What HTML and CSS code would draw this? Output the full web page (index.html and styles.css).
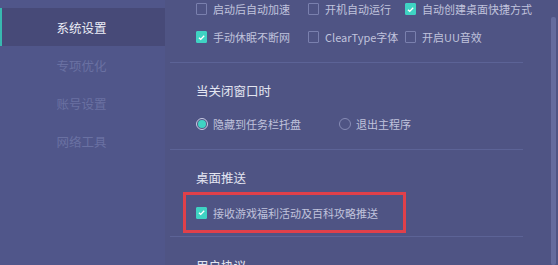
FILE: index.html
```html
<!DOCTYPE html>
<html lang="zh-CN">
<head>
<meta charset="utf-8">
<link rel="stylesheet" href="styles.css">
</head>
<body>
<div class="app">
  <nav class="sidebar">
    <div class="nav-item active">系统设置</div>
    <div class="nav-item">专项优化</div>
    <div class="nav-item">账号设置</div>
    <div class="nav-item">网络工具</div>
  </nav>
  <main class="main">
    <div class="options">
      <label class="opt"><span class="cb"></span>启动后自动加速</label>
      <label class="opt"><span class="cb"></span>开机自动运行</label>
      <label class="opt"><span class="cb on"><svg viewBox="0 0 12 12"><path d="M2.6 6.2 5 8.5 9.6 3.6"/></svg></span>自动创建桌面快捷方式</label>
      <label class="opt"><span class="cb on"><svg viewBox="0 0 12 12"><path d="M2.6 6.2 5 8.5 9.6 3.6"/></svg></span>手动休眠不断网</label>
      <label class="opt"><span class="cb"></span>ClearType字体</label>
      <label class="opt"><span class="cb"></span>开启UU音效</label>
    </div>
    <section class="section s-close">
      <h3 class="heading">当关闭窗口时</h3>
      <div class="radios">
        <label class="opt r1"><span class="radio on"></span>隐藏到任务栏托盘</label>
        <label class="opt"><span class="radio"></span>退出主程序</label>
      </div>
    </section>
    <section class="section s-push">
      <h3 class="heading">桌面推送</h3>
      <div class="highlight">
        <label class="opt"><span class="cb on"><svg viewBox="0 0 12 12"><path d="M2.6 6.2 5 8.5 9.6 3.6"/></svg></span>接收游戏福利活动及百科攻略推送</label>
      </div>
    </section>
    <section class="section s-agree">
      <h3 class="heading">用户协议</h3>
    </section>
    <div class="scrollbar"></div>
  </main>
</div>
</body>
</html>
```

FILE: styles.css
```css
* { box-sizing: border-box; margin: 0; padding: 0; }
html, body {
  width: 558px;
  height: 265px;
  overflow: hidden;
  background: #4f5484;
  font-family: "Noto Sans CJK SC", "Noto Sans", sans-serif;
}
.app {
  display: flex;
  height: 265px;
}
.sidebar {
  width: 165px;
  flex: none;
  padding-top: 8px;
  background: #50568a;
}
.nav-item {
  height: 38px;
  display: flex;
  align-items: center;
  justify-content: center;
  padding-right: 2px;
  font-size: 12.5px;
  color: #6a71a2;
}
.nav-item.active {
  background: #474a78;
  color: #eceef7;
  border-left: 2px solid #38b9b0;
  padding-right: 4px;
}
.main {
  flex: 1;
  position: relative;
  padding-left: 5px;
}
.options {
  display: grid;
  grid-template-columns: 112px 97px auto;
  row-gap: 10px;
  padding-left: 26px;
}
.opt {
  display: flex;
  align-items: center;
  height: 18px;
  font-size: 11px;
  color: #c0c3dc;
  white-space: nowrap;
}
.cb {
  width: 11px;
  height: 12px;
  border: 1px solid #7a80ae;
  border-radius: 1px;
  margin-right: 6px;
  flex: none;
  display: flex;
  align-items: center;
  justify-content: center;
}
.cb.on {
  background: #3fd3c3;
  border-color: #3fd3c3;
}
.cb svg {
  width: 11px;
  height: 11px;
  fill: none;
  stroke: #ffffff;
  stroke-width: 1.8;
}
.section {
  width: 353px;
  border-top: 1px solid #5c6396;
  padding-left: 26px;
}
.heading {
  font-size: 12.5px;
  font-weight: normal;
  line-height: 18px;
  height: 18px;
  color: #e3e5f1;
}
.s-close { margin-top: 16px; padding-top: 19px; padding-bottom: 16px; }
.radios {
  display: flex;
  margin-top: 15px;
}
.r1 { width: 143px; }
.radio {
  width: 12px;
  height: 12px;
  border: 1px solid #868bb5;
  border-radius: 50%;
  margin-right: 5px;
  flex: none;
  display: flex;
  align-items: center;
  justify-content: center;
}
.radio.on { border-color: #c9cce3; }
.radio.on::after {
  content: "";
  width: 8px;
  height: 8px;
  border-radius: 50%;
  background: #3fd3c3;
}
.s-push { padding-top: 19px; padding-bottom: 3px; }
.highlight {
  margin-top: 5px;
  margin-left: -13px;
  width: 223px;
  height: 41px;
  border: 3px solid #e0404a;
  padding-left: 10px;
  display: flex;
  align-items: center;
}
.s-agree { padding-top: 20px; }
.scrollbar {
  position: absolute;
  right: 2px;
  top: 17px;
  bottom: 0;
  width: 5px;
  background: #646b9d;
  border-radius: 2px;
}
```
